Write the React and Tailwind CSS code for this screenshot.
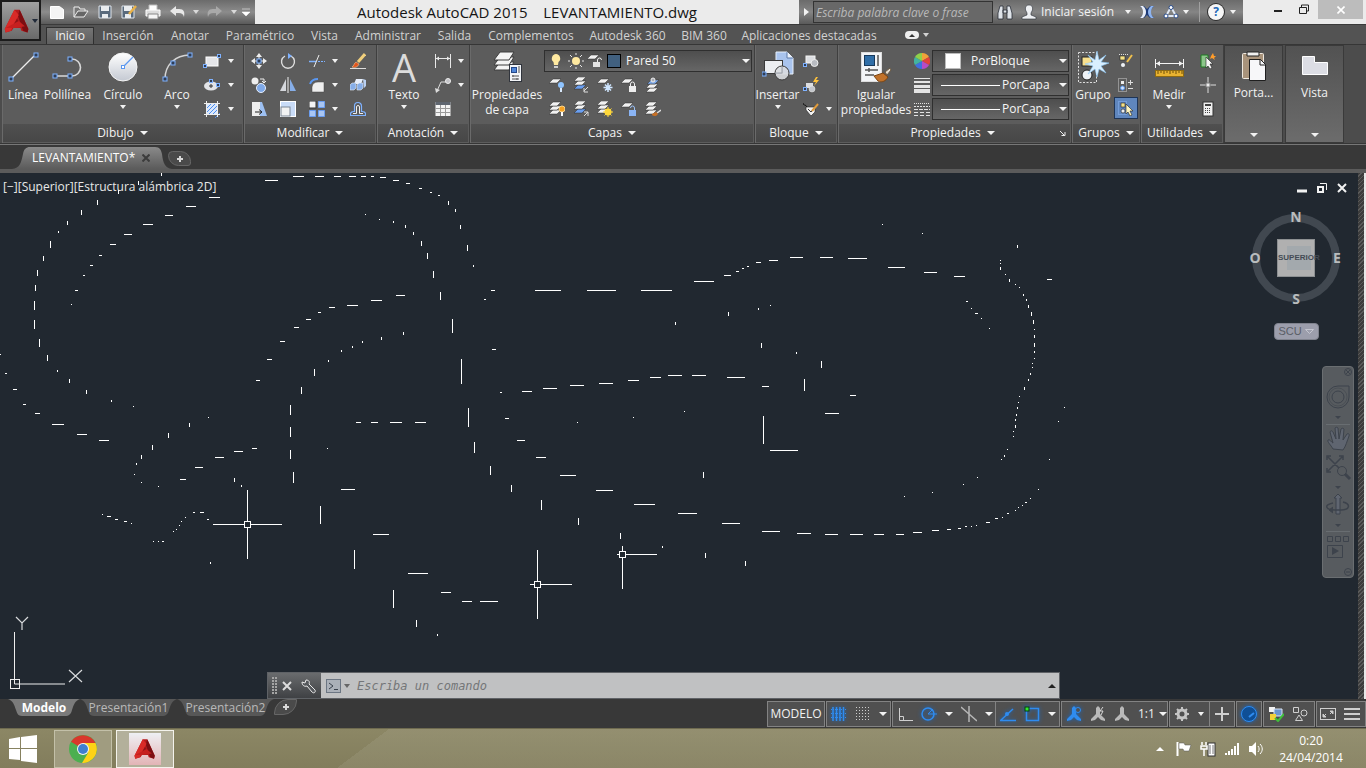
import React from 'react';
import { clsx } from 'clsx';

/* ---------- drawing data: [x, y, length] ---------- */

const horizontals = [
    [209, 197, 11], [186, 206, 10], [165, 215, 8], [143, 224, 10], [124, 234, 8], [110, 244, 6], [99, 255, 3], [90, 265, 3],
    [83, 275, 2], [75, 290, 3], [71, 304, 1], [133, 406, 1], [208, 417, 1], [0, 354, 1], [5, 373, 2], [13, 389, 4],
    [23, 404, 3], [35, 413, 5], [52, 424, 12], [77, 434, 10], [99, 440, 10], [265, 180, 13], [293, 176, 11], [315, 176, 9],
    [334, 176, 7], [349, 176, 7], [361, 176, 5], [371, 176, 3], [380, 177, 6], [393, 180, 6], [406, 183, 4], [419, 188, 3],
    [430, 192, 2], [438, 195, 2], [329, 307, 6], [318, 312, 3], [306, 319, 5], [294, 327, 5], [280, 341, 5], [267, 359, 5],
    [256, 380, 4], [347, 305, 11], [371, 300, 11], [396, 295, 9], [365, 214, 1], [379, 219, 1], [484, 299, 2], [491, 290, 4],
    [535, 290, 26], [587, 290, 29], [641, 290, 31], [492, 349, 4], [500, 392, 2], [522, 391, 10], [543, 388, 14], [570, 385, 14],
    [599, 383, 14], [628, 380, 11], [650, 377, 11], [668, 375, 14], [692, 375, 14], [727, 377, 18], [762, 386, 7],
    [180, 479, 6], [195, 467, 8], [215, 457, 9], [234, 451, 9], [252, 448, 5], [356, 422, 5], [371, 422, 7], [390, 422, 12],
    [415, 422, 11], [327, 448, 1], [341, 489, 14], [373, 534, 16], [408, 573, 20], [441, 592, 10], [462, 601, 10], [480, 601, 18],
    [102, 514, 1], [107, 516, 4], [115, 519, 3], [124, 521, 3], [131, 523, 1], [153, 541, 1], [158, 541, 1], [162, 541, 2],
    [173, 531, 1], [176, 529, 1], [179, 525, 1], [181, 521, 1], [185, 517, 1], [193, 512, 2], [200, 512, 4], [207, 519, 2],
    [134, 474, 1], [141, 482, 1], [158, 486, 1], [505, 418, 4], [517, 440, 8], [536, 457, 10], [560, 475, 16], [596, 490, 17],
    [634, 504, 21], [678, 513, 19], [577, 422, 1], [633, 417, 1], [684, 411, 1], [694, 281, 20], [724, 275, 7], [736, 271, 3],
    [742, 268, 2], [747, 266, 2], [756, 262, 5], [769, 260, 9], [790, 257, 13], [820, 257, 13], [848, 258, 19], [888, 267, 17],
    [924, 272, 13], [954, 276, 11], [882, 224, 1], [922, 233, 1], [1047, 279, 5], [966, 301, 2], [971, 308, 1], [975, 313, 3],
    [981, 318, 1], [989, 328, 1], [1064, 407, 1], [1058, 421, 1], [1049, 459, 1], [1038, 489, 1], [1030, 498, 1], [1025, 502, 2],
    [1022, 505, 1], [1018, 507, 1], [1015, 510, 1], [1007, 513, 2], [1002, 517, 1], [995, 518, 3], [986, 522, 4], [976, 525, 1],
    [971, 526, 1], [965, 526, 2], [958, 528, 3], [947, 529, 4], [932, 530, 7], [913, 532, 9], [896, 534, 8], [874, 534, 10],
    [850, 534, 13], [825, 534, 13], [797, 533, 14], [762, 531, 18], [722, 523, 18], [904, 496, 1], [932, 492, 1], [963, 484, 1],
    [977, 477, 1], [770, 450, 28], [825, 413, 14], [850, 395, 6], [770, 305, 1],
];

const verticals = [
    [161, 173, 3], [138, 181, 4], [118, 190, 4], [97, 200, 5], [81, 210, 5], [67, 221, 4], [58, 231, 2], [50, 241, 7],
    [43, 256, 5], [37, 270, 6], [35, 285, 6], [34, 301, 9], [34, 320, 9], [39, 339, 8], [47, 355, 6], [57, 370, 2],
    [69, 379, 4], [86, 390, 4], [111, 400, 2], [189, 423, 4], [328, 360, 2], [314, 369, 7], [301, 387, 7], [290, 405, 10],
    [290, 427, 10], [290, 450, 9], [293, 472, 11], [320, 506, 18], [354, 550, 19], [393, 590, 18], [416, 620, 7], [437, 634, 2],
    [168, 433, 5], [152, 445, 5], [141, 455, 4], [136, 463, 2], [234, 478, 4], [241, 485, 2], [210, 562, 2], [448, 201, 4],
    [455, 209, 3], [460, 225, 4], [467, 245, 6], [473, 265, 2], [393, 221, 2], [405, 225, 3], [413, 232, 3], [421, 241, 5],
    [427, 253, 6], [433, 271, 7], [440, 292, 8], [452, 319, 14], [461, 359, 25], [468, 408, 19], [474, 442, 11], [490, 466, 9],
    [511, 485, 7], [541, 500, 10], [578, 518, 7], [620, 533, 6], [662, 546, 2], [341, 350, 2], [352, 346, 2], [362, 341, 2],
    [381, 337, 3], [403, 332, 3], [675, 322, 3], [728, 312, 4], [758, 308, 2], [761, 343, 5], [796, 352, 2], [821, 361, 7],
    [804, 379, 12], [763, 416, 28], [703, 472, 6], [705, 553, 5], [745, 561, 5], [1017, 245, 3], [1000, 260, 1], [1000, 263, 1],
    [1000, 267, 3], [1005, 274, 1], [1009, 279, 3], [1015, 284, 1], [1019, 287, 1], [1023, 294, 2], [1026, 299, 2], [1028, 305, 3],
    [1031, 312, 4], [1033, 320, 4], [1034, 329, 1], [1034, 335, 3], [1034, 343, 4], [1034, 351, 2], [1034, 358, 1], [1032, 363, 1],
    [1032, 367, 1], [1030, 373, 2], [1028, 379, 2], [1024, 387, 3], [1019, 396, 1], [1018, 402, 1], [1017, 407, 2], [1016, 414, 2],
    [1015, 419, 2], [1015, 425, 3], [1013, 431, 1], [1013, 436, 1], [1007, 449, 1], [1004, 455, 2], [1001, 459, 1],
];

// center, then how far each arm goes left / right / up / down
const crosshairs = [
    [247, 524, 34, 34, 34, 34],
    [537, 584, 7, 34, 34, 34],
    [622, 554, 5, 34, 8, 34],
];

/* ---------- icons ---------- */

const Svg = ({ n = 16, w, h, className, children }) => (
    <svg width={w || n} height={h || n} viewBox={`0 0 ${w || n} ${h || n}`} fill="none" className={clsx('shrink-0', className)} aria-hidden="true">
        {children}
    </svg>
);

const Caret = ({ small, className }) => (
    small
        ? <Svg w={6} h={4} className={className}><path d="M0 0h6L3 4z" fill="currentColor" /></Svg>
        : <Svg w={8} h={4} className={className}><path d="M0 0h8L4 4z" fill="currentColor" /></Svg>
);

const Node = ({ x, y, s = 4 }) => (
    <rect x={x - s / 2} y={y - s / 2} width={s} height={s} fill="#2f3e57" stroke="#7fb2ff" strokeWidth="1" />
);

const Sheet = ({ x, y, fill = '#f1f1f1' }) => (
    <path d={`M${x + 4} ${y}h8l-4 4h-8z`} fill={fill} stroke="#2e2e2e" strokeWidth=".5" />
);

const LogoA = ({ n }) => (
    <svg width={n} height={n} viewBox="0 0 32 32" className="shrink-0" aria-hidden="true">
        <path d="M13 3h6l10 22-1 4-7-2-1-3h-8l-2 3-7 2-1-4z" fill="#b51a1c" />
        <path d="M19 3l10 22-1 4-5-2-6-17z" fill="#7d0e12" />
        <path d="M13 3L2 25l1 4 6-2 9-18z" fill="#d92a27" />
        <path d="M16 13l-4 7h8z" fill="#8f1316" />
        <path d="M3 24l15-8 7 6-6 1-7 1z" fill="#c6201f" />
    </svg>
);

const bigIcons = {
    line: <Svg n={32}><path d="M5 27L27 5" stroke="#eee" strokeWidth="1.3" /><Node x={4} y={28} /><Node x={29} y={4} /></Svg>,
    polyline: <Svg n={32}><path d="M4 25h16a8.500 8.500 0 0 0 0-17" stroke="#d8d8d8" strokeWidth="1.6" /><Node x={3} y={25} /><Node x={18} y={25} /><Node x={18} y={8} /></Svg>,
    circle: (
        <Svg n={32}>
            <defs><linearGradient id="gc" x1="0" y1="0" x2="0" y2="1"><stop stopColor="#fff" /><stop offset="1" stopColor="#c4c9d2" /></linearGradient></defs>
            <circle cx="16" cy="16" r="14" fill="url(#gc)" stroke="#f5f5f5" /><path d="M17 15l9-9" stroke="#5a97f0" strokeWidth="1.3" /><rect x="14.500" y="14.500" width="3" height="3" fill="#fff" stroke="#5a97f0" />
        </Svg>
    ),
    arc: <Svg n={32}><path d="M4 28C4 14 14 4 29 4" stroke="#d5d5d5" strokeWidth="1.500" /><Node x={4} y={28} /><Node x={12} y={12} /><Node x={29} y={4} /></Svg>,
    layerProps: (
        <Svg n={32}>
            {[14, 9, 4].map((y) => <path key={y} d={`M9 ${y - 3}h14l-5 8H3z`} fill="#f4f4f4" stroke="#3c3c3c" />)}
            <rect x="18.500" y="13.500" width="12" height="17" fill="#f3f5f8" stroke="#30343c" /><rect x="20.500" y="16.500" width="5" height="5" fill="#4f86d8" stroke="#24488a" />
            <path d="M28 15v7M21 25h7M21 28h7M22 24v2M26 27v2" stroke="#555" />
        </Svg>
    ),
    insert: (
        <Svg n={32}>
            <path d="M14 1h11l6 6v16H14z" fill="#a9c4ee" stroke="#e8f0fb" /><path d="M25 1v6h6" fill="#e8f0fb" stroke="#5f7ba8" />
            <rect x="2.500" y="9.500" width="18" height="13" fill="#eceef1" stroke="#3b3b3b" /><circle cx="20" cy="22" r="7" fill="#d9dbdf" fillOpacity=".9" stroke="#3b3b3b" /><path d="M20 15v7h-7" stroke="#9aa0aa" /><Node x={2} y={23} />
        </Svg>
    ),
    match: (
        <Svg n={32}>
            <rect x="1.500" y="1.500" width="20" height="29" fill="#f3f5f8" stroke="#ddd" /><rect x="4.500" y="4.500" width="10" height="10" fill="#2f6ea8" stroke="#17395c" /><path d="M18 4v11M5 19h13M5 24h9M9 17v4" stroke="#555" strokeWidth="1.500" />
            <path d="M25 21l5-4 1 2-4 5z" fill="#e6dfd2" stroke="#6b5a43" /><path d="M14 25l9-3 5 4c-2 4-6 6-10 4z" fill="#c1722a" stroke="#7a4412" />
        </Svg>
    ),
    group: (
        <Svg n={32}>
            <rect x="1.500" y="1.500" width="18" height="30" stroke="#ddd" strokeDasharray="2 1.500" /><rect x="5" y="6" width="10" height="9" fill="#f8e08e" stroke="#222" /><circle cx="10" cy="24" r="5" fill="#eef2f6" stroke="#222" />
            <path d="M20 0l2 9 7-5-5 7 8 1-8 3 5 7-7-4-2 8-2-8-7 5 5-8-8-2 8-2-5-7 7 5z" fill="#d9efff" stroke="#8cc6f5" strokeWidth=".6" />
        </Svg>
    ),
    measure: (
        <Svg n={32}>
            <path d="M2.500 8v9M30.500 8v9M3 12.500h27" stroke="#f4f4f4" /><path d="M3 12.500l4-2.500v5zM30 12.500L26 10v5z" fill="#f4f4f4" /><rect x="2.500" y="19.500" width="28" height="6" fill="#e8b230" stroke="#8e6a12" />
            <path d="M5 20v3M8 20v2M11 20v3M14 20v2M17 20v3M20 20v2M23 20v3M26 20v2M29 20v3" stroke="#6d4f08" />
        </Svg>
    ),
    clipboard: (
        <Svg n={32}>
            <rect x="4.500" y="3.500" width="21" height="25" rx="1" fill="#a8937b" stroke="#efe9e0" /><path d="M9 2h12v4H9z" fill="#f0f0f0" stroke="#222" /><path d="M11.500 9.500h11l5 5v16h-16z" fill="#f7f7f9" stroke="#1f1f1f" /><path d="M22 9v6h6" stroke="#1f1f1f" />
        </Svg>
    ),
    view: <Svg n={32}><path d="M3.500 6.500h12v6h13v12h-25z" fill="#dcdde4" stroke="#fff" /></Svg>,
};

const smallIcons = {
    rect: <Svg n={18}><rect x="3" y="5" width="12" height="9" fill="#e4e5e8" stroke="#fff" /><Node x={2} y={14} s={3} /><Node x={16} y={4} s={3} /></Svg>,
    ellipse: <Svg n={18}><ellipse cx="8" cy="10" rx="7" ry="4.500" fill="#e3e4e7" /><path d="M6 10h4M8 8v4" stroke="#333" /><Node x={8} y={5} s={3} /><Node x={15} y={9} s={3} /></Svg>,
    hatch: <Svg n={18}><rect x="4" y="4" width="10" height="10" fill="#dbe8fb" /><path d="M4 8l4-4M4 12l8-8M6 14l8-8M10 14l4-4M12 18l5-5" stroke="#4c8df0" /><path d="M3.500 1v16M14.500 1v16M1 3.500h16M1 14.500h16" stroke="#eee" /></Svg>,
    move: <Svg><path d="M8 1v14M1 8h14" stroke="#eee" /><path d="M8 0l3 4H5zM8 16l3-4H5zM0 8l4-3v6zM16 8l-4-3v6z" fill="#eee" /><Node x={8} y={8} /></Svg>,
    rotate: <Svg><path d="M5 3a6.500 6.500 0 1 0 6 0" stroke="#ddd" strokeWidth="1.400" /><path d="M8 0l4 3-4 3z" fill="#7fb2ff" /></Svg>,
    trim: <Svg><path d="M0 8.500h7" stroke="#7fb2ff" strokeWidth="1.500" /><path d="M9 8.500h7" stroke="#7fb2ff" strokeDasharray="2 1" /><path d="M10 2L5 14" stroke="#eee" /></Svg>,
    erase: <Svg><path d="M0 15.500h16" stroke="#ddd" /><path d="M15 1l-7 8" stroke="#f0cf7c" strokeWidth="3" /><path d="M6 9l3 2c-1 3-4 4-7 3 2-1 2-4 4-5z" fill="#e2571e" stroke="#fbd6a4" strokeWidth=".5" /></Svg>,
    copy: <Svg><circle cx="4" cy="4" r="3.500" fill="#eee" /><circle cx="10" cy="11" r="4.500" fill="#7fa9e8" stroke="#e6eefb" /><path d="M9 2h4v4M11 4l2 2 2-2" stroke="#eee" /></Svg>,
    mirror: <Svg><path d="M6 2v12H0z" fill="#d5d8dd" /><path d="M10 2v12h6z" fill="#86aee8" /><path d="M8 0v16" stroke="#eee" /></Svg>,
    fillet: <Svg><path d="M3 15V10a6 6 0 0 1 6-5h6v10z" fill="#eee" stroke="#444" strokeWidth=".5" /><path d="M1 7c1-3 4-5 8-5" stroke="#5a97f0" strokeWidth="2" /></Svg>,
    explode: <Svg><path d="M6 2h7l-2 5H4z" fill="#e7effb" /><path d="M0 8l2-2h4v5l-2 2H0zM7 8l2-2h4v5l-2 2H7z" fill="#86aee8" stroke="#e4ecf9" strokeWidth=".6" /><path d="M13 2l3 1v6l-2 2z" fill="#b9d0f2" /></Svg>,
    stretch: <Svg><path d="M1 1h8v14H1z" fill="#eee" /><path d="M9 1h2l5 14H9z" fill="#9dc0f2" /><path d="M4 11h6M8 8.500l3 2.500-3 2.500" stroke="#222" /></Svg>,
    scale: <Svg><rect x=".5" y=".5" width="15" height="15" fill="#c9dcf8" stroke="#fff" /><rect x="1" y="6" width="9" height="9" fill="#f2f2f2" stroke="#7c8796" /></Svg>,
    array: <Svg><rect x="0" y="0" width="7" height="7" fill="#f4f4f4" stroke="#333" /><path d="M9.500.5h6v6h-6zM9.500 9.500h6v6h-6zM.5 9.500h6v6h-6z" fill="#a9c6f3" stroke="#6a9df0" /></Svg>,
    offset: <Svg><path d="M.5 14.500h15v-2c0-1-2-2-3-2h-1V5a3.500 3.500 0 0 0-7 0v5.500h-1c-1 0-3 1-3 2z" stroke="#7fb2ff" strokeWidth="1.200" /><path d="M3 12.500h3.500V6a1.500 1.500 0 0 1 3 0v6.500H13" stroke="#eee" /></Svg>,
    dim: <Svg><path d="M.5 1v14M15.500 1v14M1 5.500h14" stroke="#e8e8e8" /><path d="M1 5.500l3-2v4zM15 5.500l-3-2v4z" fill="#e8e8e8" /></Svg>,
    leader: <Svg><path d="M2 14L6 5h5" stroke="#ddd" /><path d="M0 11l1 5 4-3z" fill="#ddd" /><circle cx="13" cy="4" r="2.500" fill="#c4c4c8" stroke="#eee" /></Svg>,
    table: <Svg><rect x=".5" y="1" width="15" height="14" fill="#f4f4f4" /><rect x=".5" y="1" width="15" height="3" fill="#5f6670" /><path d="M.5 7.500h15M.5 11.500h15M5.500 4v11M10.500 4v11" stroke="#9a9a9a" /></Svg>,
    layOff: <Svg><Sheet x={0} y={2} /><circle cx="12" cy="8" r="3" fill="#8fc4ff" /><path d="M12 11v4" stroke="#d8e8fb" strokeWidth="2" /></Svg>,
    layIso: <Svg><Sheet x={1} y={8} fill="#6b9ff0" /><Sheet x={1} y={4} /><Sheet x={1} y={0} /><path d="M15 10l-4 4m0-3v4h4" stroke="#ddd" /></Svg>,
    layFrz: <Svg><Sheet x={0} y={2} /><path d="M11 6v9M6.500 10.500h9M8 7.500l6 6M14 7.500l-6 6" stroke="#cfe6ff" strokeWidth="1.500" /></Svg>,
    layLck: <Svg><Sheet x={0} y={2} /><path d="M9.500 9V7a2 2 0 0 1 4 0v2" stroke="#eee" /><rect x="8" y="9" width="7" height="6" fill="#eee" /></Svg>,
    layCur: <Svg><Sheet x={1} y={11} /><Sheet x={1} y={7} /><Sheet x={2} y={3} fill="#7fa9e8" /><circle cx="8" cy="3" r="2" fill="#a9adb5" stroke="#eee" /></Svg>,
    layOn: <Svg><Sheet x={0} y={9} /><Sheet x={0} y={5} /><Sheet x={0} y={1} /><circle cx="13" cy="8" r="3" fill="#f5a122" stroke="#fbd58a" /><path d="M13 11v4" stroke="#fff" strokeWidth="2" /></Svg>,
    layUniso: <Svg><Sheet x={1} y={8} fill="#6b9ff0" /><Sheet x={1} y={4} /><Sheet x={1} y={0} /><path d="M11 15l4-4m-4 0h4v4" stroke="#ddd" /></Svg>,
    layThw: <Svg><Sheet x={0} y={8} /><Sheet x={0} y={4} /><Sheet x={0} y={0} /><circle cx="11" cy="11" r="3.500" fill="#ffd83a" /><path d="M11 6v10M6 11h10M7.500 7.500l7 7M14.500 7.500l-7 7" stroke="#ffd83a" /></Svg>,
    layUnl: <Svg><Sheet x={0} y={2} /><path d="M13.500 9V7a2 2 0 0 0-4 0" stroke="#9cc2f8" /><rect x="8" y="9" width="7" height="6" fill="#8ab4f4" /></Svg>,
    layMch: <Svg><Sheet x={0} y={9} /><Sheet x={0} y={5} /><Sheet x={0} y={1} /><path d="M16 9l-4 3" stroke="#ddd" strokeWidth="1.500" /><path d="M7 13l4-2 2 2c-1 2-4 3-6 1z" fill="#c66f25" /></Svg>,
    blkCreate: <Svg><rect x="3" y="3" width="9" height="7" fill="#dcdee2" stroke="#f4f4f4" /><circle cx="11.500" cy="10" r="3.500" fill="#b9bcc2" stroke="#eee" /><Node x={2} y={12} s={3} /></Svg>,
    blkEdit: <Svg><rect x="3" y="6" width="7" height="5" fill="#dcdee2" /><circle cx="9" cy="12" r="3" fill="#c4c7cc" stroke="#eee" strokeWidth=".5" /><path d="M13 0l-3 5h3l-2 4 5-6h-3l2-3z" fill="#ffc23a" /><Node x={2} y={12} s={3} /></Svg>,
    blkAttr: <Svg><path d="M0 2c0 3 3 1 4 4" stroke="#111" /><path d="M3 6h9v5l-4 4-5-6z" fill="#f2f2f2" stroke="#222" strokeWidth=".6" /><path d="M5 8l3 3 6-8" stroke="#333" /><path d="M15 3L9 10" stroke="#e29d3e" strokeWidth="2" /></Svg>,
    grpEdit: <Svg><path d="M1 1.500h9" stroke="#ddd" strokeDasharray="1 1" /><rect x="2" y="3" width="5" height="4" fill="#f5e187" stroke="#222" strokeWidth=".6" /><circle cx="5" cy="12" r="2.500" fill="#eef2f6" stroke="#222" strokeWidth=".6" /><path d="M14 2L9 9" stroke="#f0c04c" strokeWidth="2" /></Svg>,
    grpAdd: <Svg><rect x=".5" y="1.500" width="8" height="13" stroke="#ccc" strokeDasharray="1 1" /><rect x="3" y="4" width="3" height="3" fill="#eee" /><circle cx="4.500" cy="11" r="2" fill="#cfe2fb" stroke="#5a97f0" /><path d="M10 5.500h5M12.500 3v5M10 11.500h5" stroke="#ddd" /></Svg>,
    grpSel: <Svg><rect x=".5" y="1.500" width="8" height="13" stroke="#8ab4f4" strokeDasharray="1 1" /><rect x="3" y="3" width="4" height="4" fill="#f5e187" stroke="#222" strokeWidth=".6" /><circle cx="5" cy="11" r="2" fill="#eee" stroke="#222" strokeWidth=".6" /><path d="M8 4v10l2-2 2 4 2-1-2-4h3z" fill="#fbf3c0" stroke="#222" strokeWidth=".6" /></Svg>,
    quickSel: <Svg><path d="M1 2h7v12H1z" fill="#8cc68a" stroke="#1f7a22" /><path d="M6 4v11l2-2 2 3 2-1-2-4h3z" fill="#f6f6f6" stroke="#222" strokeWidth=".6" /><path d="M13 0l1 3h2l-2 2 1 2-3-2-2 1 1-3z" fill="#ff9c2a" /></Svg>,
    idPoint: <Svg><path d="M8 0v16M0 8h16" stroke="#ddd" /><rect x="6" y="6" width="4" height="4" fill="#eee" stroke="#777" /></Svg>,
    calc: <Svg><rect x="3" y="1" width="10" height="14" fill="#f1f1f1" stroke="#333" /><rect x="5" y="3" width="6" height="2" fill="#444" /><path d="M5 7.500h6M5 9.500h6M5 11.500h6" stroke="#444" strokeDasharray="1 1" /></Svg>,
};

/* ---------- ribbon pieces ---------- */

const Panel = ({ title, width, launcher, children }) => (
    <section className={clsx('flex shrink-0 flex-col border-r border-[#3f3f3f] bg-[#5c5c5c] shadow-[inset_1px_0_0_#6a6a6a]', width)}>
        <div className="flex h-[79px] pt-1">{children}</div>
        <h2 className="mx-px flex h-[18px] items-center justify-center gap-1.5 bg-linear-to-b from-[#505050] to-[#474747] text-xs text-[#f2f2f2]">
            {launcher && <span className="flex-1" />}
            {title}
            <Caret />
            {launcher && (
                <button aria-label="Cuadro de diálogo" className="flex flex-1 justify-end pr-1">
                    <Svg n={6}><path d="M0 1l4 4M5 2v3.500H1.500" stroke="#eee" /></Svg>
                </button>
            )}
        </h2>
    </section>
);

const BigButton = ({ icon, lines, width, caret }) => (
    <button className={clsx('flex shrink-0 flex-col items-center pt-0.5 text-xs leading-[15px] text-[#f2f2f2]', width)}>
        {icon}
        <span className="mt-1 text-center whitespace-pre">{lines}</span>
        {caret && <Caret small className="mt-[3px]" />}
    </button>
);

const SmallColumn = ({ names, carets = [], width }) => (
    <div className={clsx('flex shrink-0 flex-col', width)}>
        {names.map((name, i) => (
            <button key={name} aria-label={name} className="flex h-6 items-center gap-1.5 text-[#f2f2f2]">
                {smallIcons[name]}
                {carets[i] ? <Caret small className="ml-px" /> : null}
            </button>
        ))}
    </div>
);

const Combo = ({ label, value, selectClass, children, className }) => (
    <label className={clsx('flex h-[22px] items-center border border-[#2f2f2f] bg-linear-to-b from-[#4e4e4e] to-[#666] text-[#f5f5f5]', className)}>
        {children}
        <select aria-label={label} className={clsx('min-w-0 flex-1 appearance-none bg-transparent text-xs outline-none', selectClass)}>
            <option>{value}</option>
        </select>
        <Caret className="mr-px" />
    </label>
);

const tabs = [
    ['Inserción', 'w-[68px]'], ['Anotar', 'w-14'], ['Paramétrico', 'w-[84px]'], ['Vista', 'w-[45px]'], ['Administrar', 'w-[82px]'],
    ['Salida', 'w-[51px]'], ['Complementos', 'w-[102px]'], ['Autodesk 360', 'w-[91px]'], ['BIM 360', 'w-[62px]'], ['Aplicaciones destacadas', 'w-[148px]'],
];

const quick = [
    ['Nuevo', <path key="a" d="M1.500 2.500h9l4 3v9h-13z" fill="#f4f4f4" stroke="#fff" />],
    ['Abrir', <g key="a" stroke="#eee"><path d="M1 13V3h5l1 2h5v2" fill="#777" /><path d="M1 13l4-6h10l-4 6z" fill="#666" /></g>],
    ['Guardar', <g key="a"><path d="M2 2h12v12H2z" fill="#596a7c" stroke="#dde3ea" /><path d="M4 2h8v5H4zM5 10h6v4H5z" fill="#e9ecef" /></g>],
    ['Guardar como', <g key="a"><path d="M1 2h12v12H1z" fill="#596a7c" stroke="#dde3ea" /><path d="M3 2h8v5H3zM4 10h6v4H4z" fill="#e9ecef" /><path d="M15 2l-7 8" stroke="#e9b24a" strokeWidth="2.500" /></g>],
    ['Trazar', <g key="a"><path d="M4 1h8v6H4z" fill="#fff" stroke="#bbb" /><path d="M1 6h14v6H1z" fill="#dcdcdc" stroke="#fff" /><path d="M3 10h10v5H3z" fill="#f5f5f5" stroke="#888" /></g>],
];

const Header = () => (
    <header className="flex h-11 shrink-0 bg-[#535353]">
        <button aria-label="Menú de la aplicación" className="flex h-[41px] w-[41px] shrink-0 items-center gap-px border-2 border-[#1c1c1c] bg-linear-to-b from-[#a0a0a0] to-[#6a6a6a] pl-px text-[#222b3a]">
            <LogoA n={28} />
            <Caret small />
        </button>
        <div className="flex min-w-0 flex-1 flex-col">
            <div className="flex h-6 bg-[#ebebeb]">
                <div className="flex w-[214px] shrink-0 items-center bg-linear-to-b from-[#6b6b6b] via-[#8c8c8c] to-[#5a5a5a] pl-2 text-[#eee]">
                    {quick.map(([name, shape]) => (
                        <button key={name} aria-label={name} className="mr-2"><Svg>{shape}</Svg></button>
                    ))}
                    <button aria-label="Deshacer"><Svg><path d="M1 7l6-5v3h3c5 0 6 3 5 8-1-3-2-4-5-4H7v3z" fill="#e8e8e8" /></Svg></button>
                    <Caret small className="ml-2 opacity-80" />
                    <button aria-label="Rehacer" className="ml-2"><Svg><path d="M15 7L9 2v3H6C1 5 0 8 1 13c1-3 2-4 5-4h3v3z" fill="#a9a9a9" /></Svg></button>
                    <Caret small className="ml-2 opacity-80" />
                    <Svg n={8} className="ml-[5px]"><path d="M0 1h8M0 4h8L4 8z" fill="#fff" stroke="#fff" strokeWidth=".5" /></Svg>
                </div>
                <h1 className="min-w-0 flex-1 truncate text-center text-[15px] leading-6 whitespace-pre text-[#151515]">{'Autodesk AutoCAD 2015    LEVANTAMIENTO.dwg'}</h1>
                <div className="flex w-[444px] shrink-0 items-center bg-linear-to-b from-[#6b6b6b] via-[#858585] to-[#5a5a5a] text-[#f2f2f2]">
                    <Svg w={5} h={8} className="ml-[5px]"><path d="M0 0v8l5-4z" fill="#f2f2f2" /></Svg>
                    <input aria-label="Buscar" placeholder="Escriba palabra clave o frase" className="ml-1 h-[22px] w-[180px] border border-[#333] bg-[#686868] px-0.5 text-xs italic outline-none placeholder:text-[#b8b8b8]" />
                    <Svg className="ml-1"><path d="M1 15V9l2-7h3v13zM15 15V9l-2-7h-3v13zM6 6h4v3H6z" fill="#dfe4ea" stroke="#2a2f38" strokeWidth=".8" /></Svg>
                    <Svg className="ml-2"><path d="M8 1c3 0 4 2 3.500 5L10 9v2l5 2v2H1v-2l5-2V9L4.500 6C4 3 5 1 8 1z" fill="#eef0f3" stroke="#2a2f38" strokeWidth=".6" /></Svg>
                    <button className="ml-1 w-20 text-left text-xs whitespace-nowrap">Iniciar sesión</button>
                    <Caret small className="ml-1" />
                    <Svg className="ml-2"><path d="M1 2h4l3 3 3-3h4l-5 6 5 6h-4l-3-3-3 3H1l5-6z" fill="#1d3a78" /><path d="M1 2h3c4 3 4 9 0 12H1c4-3 4-9 0-12z" fill="#e9eef7" /><path d="M15 2h-3c-4 3-4 9 0 12h3c-4-3-4-9 0-12z" fill="#8fb4ee" /></Svg>
                    <Svg className="ml-2"><path d="M8 3l5 9H3z" stroke="#dfe8f5" strokeWidth="2" /><circle cx="8" cy="3.500" r="2" fill="#fff" stroke="#274a8a" /><circle cx="3" cy="12" r="2" fill="#fff" stroke="#274a8a" /><circle cx="13" cy="12" r="2" fill="#fff" stroke="#274a8a" /></Svg>
                    <Caret small className="ml-1" />
                    <span className="ml-2.5 h-5 w-px bg-[#a0a0a0]" />
                    <button aria-label="Ayuda" className="ml-2 flex size-4 items-center justify-center rounded-full bg-[#f6f6f6] text-xs font-bold text-[#2467b5] ring-1 ring-[#2c2c2c]">?</button>
                    <Caret small className="ml-1.5" />
                </div>
                <div className="flex w-[123px] shrink-0 items-start text-[#222]">
                    <button aria-label="Minimizar" className="ml-[27px] flex h-[18px] w-4 items-center justify-center"><Svg n={10}><path d="M1 7h8" stroke="#222" strokeWidth="2" /></Svg></button>
                    <button aria-label="Restaurar" className="ml-2.5 flex h-[18px] w-4 items-center justify-center"><Svg n={10}><path d="M.5 3.500h7v6h-7zM2.500 3V1h7v6H8" stroke="#222" /></Svg></button>
                    <button aria-label="Cerrar" className="ml-1.5 flex h-[19px] flex-1 items-center justify-center bg-[#bcbcbc]"><Svg n={8}><path d="M.5.5l7 7m0-7l-7 7" stroke="#fff" strokeWidth="1.600" /></Svg></button>
                    <span className="w-[3px]" />
                </div>
            </div>
            <nav className="flex h-5 items-end border-t border-[#3a3a3a] bg-[#535353] pl-[5px] text-xs text-[#d2d2d2]">
                <button className="h-[17px] w-[48px] border border-b-0 border-[#2f2f2f] bg-linear-to-b from-[#757575] to-[#5f5f5f] leading-[14px] text-[#f2f2f2]">Inicio</button>
                {tabs.map(([name, width]) => (
                    <button key={name} className={clsx('h-[17px] shrink-0 leading-[15px] whitespace-nowrap', width)}>{name}</button>
                ))}
                <button aria-label="Minimizar cinta" className="mb-[5px] ml-[22px] flex h-2 w-[14px] items-center justify-center rounded-sm bg-[#eee]"><Svg w={6} h={3}><path d="M0 3h6L3 0z" fill="#333" /></Svg></button>
                <Caret small className="mb-[7px] ml-1" />
            </nav>
        </div>
    </header>
);

const Ribbon = () => (
    <div className="flex h-[100px] shrink-0 overflow-hidden border-y border-[#363636] bg-[#4c4c4c] pl-0.5">
        <Panel title="Dibujo" width="w-[242px]">
            <BigButton icon={bigIcons.line} lines="Línea" width="w-[42px]" />
            <BigButton icon={bigIcons.polyline} lines="Polilínea" width="w-[47px]" />
            <BigButton icon={bigIcons.circle} lines="Círculo" width="w-[64px]" caret />
            <BigButton icon={bigIcons.arc} lines="Arco" width="w-[44px]" caret />
            <SmallColumn names={['rect', 'ellipse', 'hatch']} carets={[1, 1, 1]} width="ml-1" />
        </Panel>
        <Panel title="Modificar" width="w-[133px]">
            <SmallColumn names={['move', 'copy', 'stretch']} width="ml-[7px] w-[29px]" />
            <SmallColumn names={['rotate', 'mirror', 'scale']} width="w-[29px]" />
            <SmallColumn names={['trim', 'fillet', 'array']} carets={[1, 1, 1]} width="w-[41px]" />
            <SmallColumn names={['erase', 'explode', 'offset']} />
        </Panel>
        <Panel title="Anotación" width="w-[93px]">
            <BigButton
                icon={<span className="flex h-8 items-center text-[38px] leading-8 text-[#dcdcdc]">A</span>}
                lines="Texto"
                width="w-[54px]"
                caret
            />
            <SmallColumn names={['dim', 'leader', 'table']} carets={[1, 1]} width="ml-1" />
        </Panel>
        <Panel title="Capas" width="w-[285px]">
            <BigButton icon={bigIcons.layerProps} lines={'Propiedades\nde capa'} width="w-[74px]" />
            <div className="flex-1 pr-0.5">
                <Combo label="Capa" value="Pared 50" className="mt-px" selectClass="pl-[5px]">
                    <Svg className="ml-[3px]"><path d="M8 1a4.500 4.500 0 0 1 2.500 8L10 12H6l-.5-3A4.500 4.500 0 0 1 8 1z" fill="#ffe9a0" /><path d="M6 13h4v2H6z" fill="#ccc" /></Svg>
                    <Svg className="ml-1"><circle cx="8" cy="8" r="4" fill="#ffe9a0" /><path d="M8 0v2M8 14v2M0 8h2M14 8h2M2 2l2 2M12 12l2 2M14 2l-2 2M2 14l2-2" stroke="#e8e8e8" /></Svg>
                    <Svg className="ml-[3px]"><Sheet x={0} y={2} /><path d="M10.500 9V7a2 2 0 0 1 4 0" stroke="#eee" /><rect x="6" y="9" width="7" height="5" fill="#e4e4e4" /></Svg>
                    <span className="ml-1 size-[14px] border border-black bg-[#41607f]" />
                </Combo>
                <div className="mt-px ml-[5px] grid w-[120px] grid-cols-5">
                    {['layOff', 'layIso', 'layFrz', 'layLck', 'layCur', 'layOn', 'layUniso', 'layThw', 'layUnl', 'layMch'].map((name) => (
                        <button key={name} aria-label={name} className="flex h-6 items-center">{smallIcons[name]}</button>
                    ))}
                </div>
            </div>
        </Panel>
        <Panel title="Bloque" width="w-[83px]">
            <BigButton icon={bigIcons.insert} lines="Insertar" width="w-[45px]" caret />
            <SmallColumn names={['blkCreate', 'blkEdit', 'blkAttr']} carets={[0, 0, 1]} width="ml-[3px]" />
        </Panel>
        <Panel title="Propiedades" width="w-[234px]" launcher>
            <BigButton icon={bigIcons.match} lines={'Igualar\npropiedades'} width="w-[76px]" />
            <div className="flex-1 pr-0.5">
                <div className="flex h-6 items-center gap-0.5">
                    <Svg>
                        <path d="M8 8V0a8 8 0 0 1 7 4z" fill="#f0a13a" /><path d="M8 8l7-4a8 8 0 0 1 0 8z" fill="#e2423a" /><path d="M8 8l7 4a8 8 0 0 1-7 4z" fill="#b84bc4" />
                        <path d="M8 8v8a8 8 0 0 1-7-4z" fill="#3f6fe0" /><path d="M8 8l-7 4a8 8 0 0 1 0-8z" fill="#43b3a0" /><path d="M8 8L1 4a8 8 0 0 1 7-4z" fill="#8fd14a" />
                    </Svg>
                    <Combo label="Color" value="PorBloque" className="flex-1" selectClass="pl-2.5">
                        <span className="ml-3 size-4 border border-[#bbb] bg-white" />
                    </Combo>
                </div>
                <div className="flex h-6 items-center gap-0.5">
                    <Svg><path d="M0 1.500h16" stroke="#e4e4e4" /><path d="M0 5h16" stroke="#e4e4e4" strokeWidth="2" /><path d="M0 9.500h16" stroke="#e4e4e4" strokeWidth="3" /><path d="M0 14h16" stroke="#e4e4e4" strokeWidth="4" /></Svg>
                    <Combo label="Grosor de línea" value="PorCapa" className="flex-1" selectClass="pl-0.5">
                        <span className="ml-2 h-px w-[59px] bg-white" />
                    </Combo>
                </div>
                <div className="flex h-6 items-center gap-0.5">
                    <Svg><path d="M0 2.500h16" stroke="#e4e4e4" strokeDasharray="1 1" /><path d="M0 5.500h16" stroke="#e4e4e4" strokeDasharray="2 1" /><path d="M0 8.500h16" stroke="#e4e4e4" strokeDasharray="4 1" /><path d="M0 11.500h16M0 14.500h16" stroke="#e4e4e4" strokeDasharray="4 2" /></Svg>
                    <Combo label="Tipo de línea" value="PorCapa" className="flex-1" selectClass="pl-0.5">
                        <span className="ml-2 h-px w-[59px] bg-white" />
                    </Combo>
                </div>
            </div>
        </Panel>
        <Panel title="Grupos" width="w-[69px]">
            <BigButton icon={bigIcons.group} lines="Grupo" width="w-[42px]" />
            <div>
                <button aria-label="Desagrupar" className="flex h-6 w-6 items-center justify-center">{smallIcons.grpEdit}</button>
                <button aria-label="Editar grupo" className="flex h-6 w-6 items-center justify-center">{smallIcons.grpAdd}</button>
                <button aria-label="Selección de grupos" className="flex h-[22px] w-6 items-center justify-center border border-[#1f3557] bg-[#5f86bd]">{smallIcons.grpSel}</button>
            </div>
        </Panel>
        <Panel title="Utilidades" width="w-[83px]">
            <BigButton icon={bigIcons.measure} lines="Medir" width="w-[56px]" caret />
            <SmallColumn names={['quickSel', 'idPoint', 'calc']} width="ml-[3px]" />
        </Panel>
        {[['Porta...', bigIcons.clipboard], ['Vista', bigIcons.view]].map(([name, icon]) => (
            <button key={name} className="mr-0.5 flex w-[59px] shrink-0 flex-col items-center border border-[#3a3a3a] bg-linear-to-b from-[#525252] to-[#6c6c6c] pt-1 text-xs leading-[15px] text-[#f2f2f2]">
                {icon}
                <span className="mt-[3px]">{name}</span>
                <Caret className="mt-auto mb-[5px]" />
            </button>
        ))}
        <div className="flex-1" />
    </div>
);

const Plus = () => <Svg n={8}><path d="M4 1v6M1 4h6" stroke="#d8d8d8" strokeWidth="2" /></Svg>;

const DocTabs = () => (
    <div className="flex h-[29px] shrink-0 items-end border-t border-[#777] border-b-4 border-b-[#5b5b5b] bg-[#383838] pl-3">
        <div className="grid">
            <Svg w={160} h={22} className="[grid-area:1/1]">
                <defs><linearGradient id="dt" x1="0" y1="0" x2="0" y2="1"><stop stopColor="#8a8a8a" /><stop offset="1" stopColor="#5b5b5b" /></linearGradient></defs>
                <path d="M0 22c8-1 9-6 11-15 1-5 3-7 7-7h125c5 0 6 3 7 7 1 9 3 14 10 15z" fill="url(#dt)" />
            </Svg>
            <div className="flex items-center gap-1 pl-5 text-xs text-white [grid-area:1/1]">
                <button className="w-[106px] text-left">LEVANTAMIENTO*</button>
                <button aria-label="Cerrar dibujo"><Svg n={8}><path d="M.5.5l7 7m0-7l-7 7" stroke="#3c3c3c" strokeWidth="2" /></Svg></button>
            </div>
        </div>
        <button aria-label="Nuevo dibujo" className="mb-[3px] -ml-1 flex h-[15px] w-[23px] items-center justify-center rounded-tl-md rounded-tr-[14px] rounded-br-sm rounded-bl-[14px] border border-[#666] bg-[#4a4a4a]"><Plus /></button>
    </div>
);

/* ---------- model space ---------- */

const Drawing = () => (
    <svg className="absolute inset-0 h-full w-full" shapeRendering="crispEdges" aria-hidden="true">
        <g transform="translate(0 -173)" fill="#fff">
            {horizontals.map(([x, y, len]) => <rect key={`h${x}-${y}`} x={x} y={y} width={len} height="1" />)}
            {verticals.map(([x, y, len]) => <rect key={`v${x}-${y}`} x={x} y={y} width="1" height={len} />)}
            {crosshairs.map(([x, y, l, r, u, d]) => (
                <g key={x}>
                    <rect x={x - l} y={y} width={l + r + 1} height="1" />
                    <rect x={x} y={y - u} width="1" height={u + d + 1} />
                    <rect x={x - 3} y={y - 3} width="7" height="7" />
                    <rect x={x - 2} y={y - 2} width="5" height="5" fill="#212830" />
                </g>
            ))}
        </g>
    </svg>
);

const ViewCube = () => (
    <div className="absolute top-9 right-3 flex w-[100px] flex-col items-center">
        <div className="grid place-items-center">
            <Svg n={92} className="[grid-area:1/1]"><circle cx="46" cy="46" r="40" stroke="#414850" strokeWidth="8" /></Svg>
            <div className="grid h-[98px] w-[98px] grid-cols-[16px_1fr_16px] grid-rows-[16px_1fr_16px] place-items-center text-sm leading-4 font-bold text-[#b9bcbd] [grid-area:1/1]">
                <span className="col-start-2 row-start-1">N</span>
                <span className="col-start-1 row-start-2">O</span>
                <button className="col-start-2 row-start-2 grid size-[38px] place-items-center border border-[#8d9092] bg-[#b0b0b0]">
                    <span className="size-6 bg-[#a3a9ad] [grid-area:1/1]" />
                    <span className="font-['Liberation_Sans_Narrow','Liberation_Sans',sans-serif] text-[8px] leading-3 font-bold text-[#434b55] [grid-area:1/1]">SUPERIOR</span>
                </button>
                <span className="col-start-3 row-start-2">E</span>
                <span className="col-start-2 row-start-3">S</span>
            </div>
        </div>
        <button className="mt-4 flex h-[17px] w-[45px] items-center justify-between rounded border border-[#80838e] bg-[#9c9eac] px-1 font-['Liberation_Sans',sans-serif] text-[11px] text-[#5a5d66]">
            SCU
            <Svg w={9} h={5}><path d="M.5.5h8l-4 4z" stroke="#c4c6d0" /></Svg>
        </button>
    </div>
);

const NavBar = () => (
    <div className="absolute top-[193px] right-1 flex h-[212px] w-8 flex-col items-center rounded border border-[#6a6e71] bg-[#575b5f]">
        <Svg w={30} h={210}>
            <g stroke="#3d434c">
                <circle cx="25" cy="5" r="3.500" /><path d="M23 3l4 4m0-4l-4 4" />
                <path d="M15 19h11v11a11 11 0 1 1-11-11z" /><circle cx="15" cy="30" r="6" /><circle cx="15" cy="30" r="9" strokeOpacity=".5" />
                <path d="M3 57.500h24M3 164.500h24" stroke="#686d71" />
                <path d="M10 82c-2-4-6-7-5-9 2-1 3 2 5 3L7 65c1-2 2-1 3 0l3 7-1-11c1-1 2-1 3 0l1 11 2-10c1-1 2-1 3 0l-1 11 4-6c1-1 3 0 2 2-2 5-3 10-6 14z" fill="#5f6570" />
                <path d="M5 90l14 14M19 90L5 104M4 93v-4h4M16 89h4v4M4 101v4h4" strokeWidth="1.500" /><circle cx="19" cy="104" r="4.500" fill="#575b5f" /><path d="M22 107l5 5" strokeWidth="3" />
                <path d="M15 127l-4 4h2v16h4v-16h2z" fill="#5f6570" /><path d="M10 136c-10 2-7 7 2 7h6c9 0 10-6 2-8" strokeWidth="1.500" /><path d="M10 140l-4 3 4 3" fill="#3d434c" />
                <path d="M4.500 169.500h5v5h-5zM12.500 169.500h5v5h-5zM20.500 169.500h5v5h-5zM4.500 178.500h15v12h-15z" />
                <circle cx="25" cy="205" r="3.500" /><path d="M23 205h4" />
            </g>
            <path d="M12 49h6l-3 3zM12 119h6l-3 3zM12 157h6l-3 3zM9 180v8l7-4z" fill="#3d434c" />
        </Svg>
    </div>
);

const CommandLine = () => (
    <div className="absolute bottom-0 left-[267px] flex h-[27px] w-[793px] items-stretch border border-[#5f6266] bg-[#c0c1c2]">
        <div className="flex w-[53px] items-center bg-linear-to-b from-[#6a6c6e] to-[#3f4144] pl-1">
            <Svg w={6} h={18}><path d="M1 0v18M4 0v18" stroke="#a5a5a5" strokeWidth="2" strokeDasharray="2 1" /></Svg>
            <button aria-label="Cerrar" className="ml-1"><Svg n={10}><path d="M1 1l8 8m0-8L1 9" stroke="#dcdcdc" strokeWidth="2" /></Svg></button>
            <button aria-label="Personalizar" className="ml-2"><Svg><path d="M2 4l3 1 1-3c3 0 4 2 3 4l6 6c1 2-1 4-3 2L7 8C4 9 2 7 2 4z" fill="#55585c" stroke="#e8e8e8" /></Svg></button>
        </div>
        <button aria-label="Comandos recientes" className="ml-[5px] flex items-center gap-[3px] text-[#666]">
            <Svg w={15} h={14}><rect x=".5" y=".5" width="14" height="13" fill="#aab0b8" stroke="#6c7683" /><path d="M3 4l4 3-4 3M8 10.500h4" stroke="#39414c" /></Svg>
            <Caret small />
        </button>
        <input aria-label="Línea de comando" placeholder="Escriba un comando" className="min-w-0 flex-1 bg-transparent px-[7px] font-['DejaVu_Sans_Mono','Liberation_Mono',monospace] text-xs italic outline-none placeholder:text-[#747678]" />
        <button aria-label="Historial" className="mr-[3px]"><Svg w={8} h={4}><path d="M0 4h8L4 0z" fill="#222" /></Svg></button>
    </div>
);

const ModelSpace = () => (
    <main className="flex min-h-0 flex-1 bg-[#212830]">
        <div className="relative min-w-0 flex-1 overflow-hidden">
            <p className="absolute top-1.5 left-[3px] text-xs leading-4 text-[#e8e8e8]">[−][Superior][Estructura alámbrica 2D]</p>
            <Drawing />
            <div className="absolute top-2.5 right-[11px] flex gap-2.5">
                <button aria-label="Minimizar vista"><Svg n={10}><path d="M0 8h10" stroke="#f2f2f2" strokeWidth="3" /></Svg></button>
                <button aria-label="Restaurar vista"><Svg n={10}><path d="M1 4h5v5H1z" stroke="#f2f2f2" strokeWidth="2" /><path d="M3 .5h6.500V7" stroke="#f2f2f2" /></Svg></button>
                <button aria-label="Cerrar vista"><Svg n={10}><path d="M1 1l8 8m0-8L1 9" stroke="#f2f2f2" strokeWidth="2" /></Svg></button>
            </div>
            <ViewCube />
            <NavBar />
            <Svg w={80} h={80} className="absolute bottom-[9px] left-2">
                <path d="M6.500 22v52H57" stroke="#eee" /><rect x="2.500" y="69.500" width="9" height="9" stroke="#eee" />
                <path d="M8 7l6 6 6-6M14 13v7M61 60l13 12M74 60L61 72" stroke="#d8dadc" strokeWidth="1.200" />
            </Svg>
            <CommandLine />
        </div>
        <div className="w-1.5 bg-[repeating-linear-gradient(135deg,#3c3c3c_0_2px,#5a5a5a_2px_3px)]" />
        <div className="w-0.5 bg-[#e8e8e8]" />
    </main>
);

/* ---------- status bar ---------- */

const Cell = ({ className, children }) => (
    <div className={clsx('flex h-[26px] shrink-0 items-center border border-[#838383] bg-[#505050] text-[#f2f2f2]', className)}>{children}</div>
);

const Toggle = ({ label, on, children, className }) => (
    <button aria-label={label} className={clsx('flex shrink-0 items-center', on && 'drop-shadow-[0_0_2px_#1468c8]', className)}>
        <Svg>{children}</Svg>
    </button>
);

const compass = 'M8 0l2 2v6l5 5v2l-4-1-3-3-3 3-4 1v-2l5-5V2z';

const StatusBar = () => (
    <footer className="flex h-[29px] shrink-0 justify-between bg-[#383838]">
        <div className="flex items-start pl-2 text-xs">
            {[['Modelo', true, 72], ['Presentación1', false, 97], ['Presentación2', false, 97]].map(([name, active, w]) => (
                <button key={name} className="grid">
                    <Svg w={w} h={17} className="[grid-area:1/1]">
                        <path d={`M0 0h${w}c-5 2-6 5-8 11-1 4-3 6-7 6H14c-4 0-5-3-6-6C6 5 5 2 0 0z`} fill={active ? '#7b7b7b' : '#575757'} />
                    </Svg>
                    <span className={clsx('text-center leading-[17px] [grid-area:1/1]', active ? 'font-bold text-white' : 'text-[#b9b9b9]')}>{name}</span>
                </button>
            ))}
            <button aria-label="Nueva presentación" className="flex h-4 w-[23px] items-center justify-center rounded-tl-[14px] rounded-br-[14px] border border-[#666] bg-[#4a4a4a]"><Plus /></button>
        </div>
        <div className="flex items-center gap-px">
            <Cell className="w-[58px] justify-center"><button className="text-xs">MODELO</button></Cell>
            <Cell className="w-[65px]">
                <Toggle label="Rejilla" on className="ml-1"><path d="M2 1v14M5.500 1v14M9 1v14M12.500 1v14" stroke="#2f8cf0" strokeWidth="1.500" /><path d="M0 3.500h16M0 7.500h16M0 11.500h16" stroke="#2f8cf0" strokeDasharray="1 1" /></Toggle>
                <Toggle label="Forzado" className="ml-2"><path d="M1 1.500h14M1 4.500h14M1 7.500h14M1 10.500h14M1 13.500h14" stroke="#cfcfcf" strokeDasharray="1 2" /></Toggle>
                <Caret className="ml-2" />
            </Cell>
            <div className="flex">
                <Cell className="w-[104px]">
                    <Toggle label="Orto" className="ml-1"><path d="M2.500 2v12.500H16M2.500 10.500h4v4" stroke="#cfcfcf" /></Toggle>
                    <Toggle label="Polar" on className="ml-2"><circle cx="7" cy="8" r="6" stroke="#2f8cf0" strokeWidth="1.500" /><path d="M7 8h9M7 8l5-5" stroke="#2f8cf0" /></Toggle>
                    <Caret className="ml-2" />
                    <Toggle label="Dibujo isométrico" className="ml-2"><path d="M0 1l16 14M8 0v16" stroke="#b5b5b5" strokeWidth="1.500" /></Toggle>
                    <Caret className="ml-2" />
                </Cell>
                <Cell className="w-16 border-l-0">
                    <Toggle label="Rastreo" on className="ml-1"><path d="M0 14.500h16M1 14L13 3" stroke="#2f8cf0" strokeWidth="1.500" /><circle cx="7" cy="8" r="2" fill="#2f8cf0" /></Toggle>
                    <Toggle label="Referencia a objetos" on className="ml-2"><rect x="2.500" y="2.500" width="12" height="12" stroke="#2f8cf0" strokeWidth="1.500" /><rect x="1" y="1" width="4" height="4" fill="#2ee82e" stroke="#083c08" /></Toggle>
                    <Caret className="ml-2" />
                </Cell>
            </div>
            <Cell className="w-[107px]">
                <Toggle label="Visibilidad de anotación" on className="ml-1"><path d={compass} fill="#2f8cf0" /><circle cx="12" cy="4" r="2.500" stroke="#2f8cf0" fill="#505050" /></Toggle>
                <Toggle label="Autoescala" className="ml-2"><path d={compass} fill="#b9b9b9" /><path d="M13 1l-3 4h3l-2 4" stroke="#d8d8d8" /></Toggle>
                <Toggle label="Escala" className="ml-2"><path d={compass} fill="#b9b9b9" /></Toggle>
                <button className="ml-2 flex items-center gap-1 text-xs">1:1<Caret /></button>
            </Cell>
            <div className="flex">
                <Cell className="w-[41px]">
                    <Toggle label="Espacio de trabajo" className="ml-1"><circle cx="8" cy="8" r="4" stroke="#c4c4c4" strokeWidth="3" /><path d="M8 1v2M8 13v2M1 8h2M13 8h2M3 3l1.500 1.500M11.500 11.500L13 13M13 3l-1.500 1.500M3 13l1.500-1.500" stroke="#c4c4c4" strokeWidth="2" /></Toggle>
                    <Caret small className="ml-2" />
                </Cell>
                <Cell className="w-[25px] justify-center border-l-0"><Toggle label="Supervisor de anotación"><path d="M8 1v14M1 8h14" stroke="#cfcfcf" strokeWidth="2" /></Toggle></Cell>
            </div>
            <Cell className="w-[26px] justify-center"><Toggle label="Rendimiento" on><circle cx="8" cy="8" r="7.500" fill="#0f4f96" stroke="#2f8cf0" /><path d="M8 11l5-4" stroke="#2f8cf0" strokeWidth="2" /></Toggle></Cell>
            <Cell className="w-[52px]">
                <Toggle label="Bandeja" className="ml-1"><path d="M1 1h6v5H1z" fill="#f4f4f4" /><path d="M6 3h8v7H6z" fill="#6c95cf" stroke="#dbe6f5" /><path d="M2 8h6v6H2z" fill="#f4d13a" /><path d="M7 12l3 3 6-7" stroke="#3fbf3a" strokeWidth="2" /></Toggle>
                <Toggle label="Aislar objetos" className="ml-2"><path d="M1.500 1.500h5v5h-5zM7 9l3.500 5.500h-7z" stroke="#cfcfcf" /><circle cx="12" cy="7" r="3" stroke="#cfcfcf" /></Toggle>
            </Cell>
            <Cell className="w-[50px]">
                <Toggle label="Pantalla completa" className="ml-[3px]"><rect x=".5" y="2.500" width="15" height="11" stroke="#cfcfcf" /><path d="M3 11V8l3 3zM13 5v3l-3-3zM4 10l2-2M12 6l-2 2" fill="#cfcfcf" stroke="#cfcfcf" /></Toggle>
                <Toggle label="Personalización" className="ml-2"><path d="M0 3h16M0 8h16M0 13h16" stroke="#cfcfcf" strokeWidth="2" /></Toggle>
            </Cell>
        </div>
    </footer>
);

const Taskbar = () => (
    <div className="flex h-10 shrink-0 items-center border-t border-[#6f6b50] bg-[linear-gradient(143deg,transparent_0_234px,#ffffff12_234px_100%),linear-gradient(#8c8765,#827d5c)] text-white">
        <button aria-label="Inicio" className="ml-[9px]">
            <Svg n={28}><path d="M0 4l11-2v11H0zM12 2l16-2v13H12zM0 14h11v11L0 24zM12 14h16v14l-16-2z" fill="#fff" /></Svg>
        </button>
        <button aria-label="Chrome" className="ml-[17px] flex h-[38px] w-[58px] items-center justify-center border border-[#c3c0a8] bg-[#a09c80]">
            <Svg n={28}>
                <circle cx="14" cy="14" r="14" fill="#4caf50" />
                <path d="M14 14L2 6.800A14 14 0 0 1 26.500 8H14z" fill="#d9372c" /><path d="M14 8h12.500A14 14 0 0 1 13 28l6-10z" fill="#fdd217" />
                <circle cx="14" cy="14" r="6" fill="#f4f4f4" /><circle cx="14" cy="14" r="5" fill="#3f7fd0" />
            </Svg>
        </button>
        <button aria-label="AutoCAD" className="ml-1 flex h-[38px] w-[58px] items-center justify-center border border-[#f4f3ec] bg-[#b3b09b]">
            <span className="flex size-8 items-center justify-center bg-linear-to-b from-[#eef0f4] to-[#e2b4b6]"><LogoA n={24} /></span>
        </button>
        <div className="ml-auto flex items-center">
            <Svg w={8} h={4}><path d="M0 4h8L4 0z" fill="#fff" /></Svg>
            <Svg className="ml-3"><path d="M1.500 1v14" stroke="#fff" strokeWidth="2" /><path d="M3 2h5l1 2h6l-2 6H8L7 8H3z" fill="#fff" stroke="#555" strokeWidth=".5" /></Svg>
            <Svg className="ml-2"><rect x="8" y="2" width="7" height="13" fill="#fff" stroke="#333" /><path d="M10 4v9M13 4v9" stroke="#777" /><path d="M2 1v3M6 1v3M1 5h6v3H1zM4 8v7" stroke="#fff" strokeWidth="1.500" /></Svg>
            <Svg className="ml-2"><path d="M1 12h2v2H1zM4 10h2v4H4zM7 8h2v6H7zM10 5h2v9h-2zM13 2h2v12h-2z" fill="#fff" /></Svg>
            <Svg className="ml-2"><path d="M1 5h3l4-4v14l-4-4H1z" fill="#fff" /><path d="M10 5c1.500 2 1.500 4 0 6M12 3c3 3 3 7 0 10" stroke="#fff" /></Svg>
            <time className="w-[94px] text-center text-xs leading-[17px]">0:20<br />24/04/2014</time>
            <span className="w-2" />
        </div>
    </div>
);

export default function App() {
    return (
        <div className="flex h-screen flex-col overflow-hidden bg-[#383838] font-['Open_Sans','Noto_Sans',sans-serif]">
            <Header />
            <Ribbon />
            <DocTabs />
            <ModelSpace />
            <StatusBar />
            <Taskbar />
        </div>
    );
}
